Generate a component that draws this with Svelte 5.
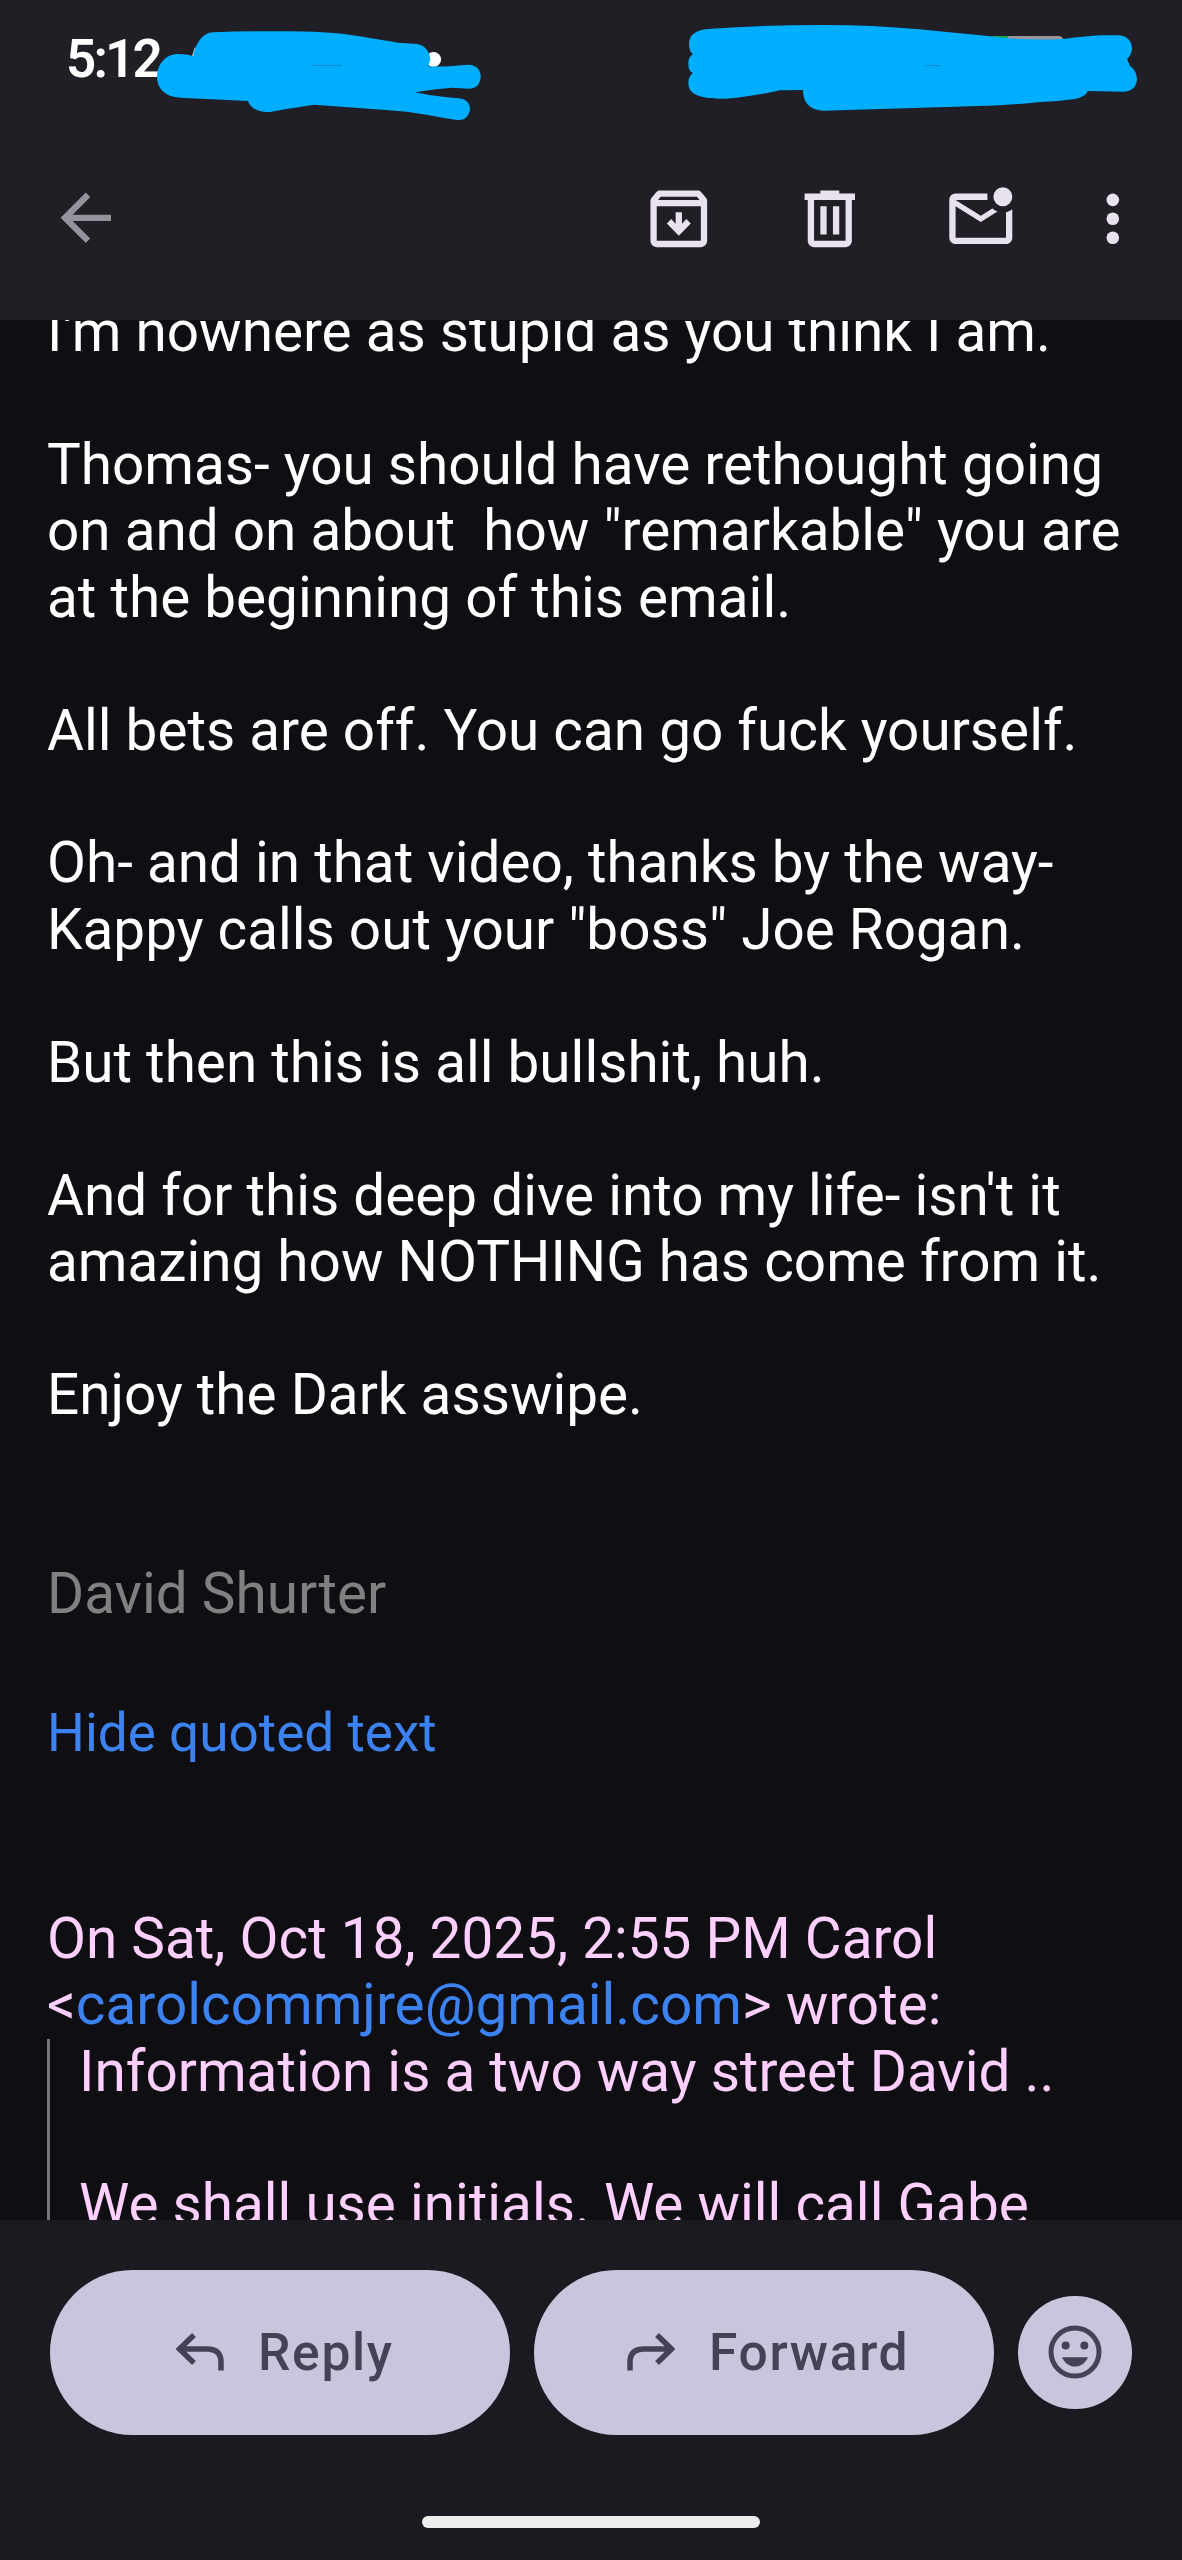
<!-- MailView.svelte -->
<script>
  const time = '5:12';
  const sender = 'Carol';
  const email = 'carolcommjre@gmail.com';

  const paragraphs = [
    ["I'm nowhere as stupid as you think I am."],
    [
      'Thomas- you should have rethought going',
      'on and on about  how "remarkable" you are',
      'at the beginning of this email.'
    ],
    ['All bets are off. You can go fuck yourself.'],
    [
      'Oh- and in that video, thanks by the way-',
      'Kappy calls out your "boss" Joe Rogan.'
    ],
    ['But then this is all bullshit, huh.'],
    [
      "And for this deep dive into my life- isn't it",
      'amazing how NOTHING has come from it.'
    ],
    ['Enjoy the Dark asswipe.']
  ];

  const quoted = [
    'Information is a two way street David ..',
    'We shall use initials. We will call Gabe'
  ];
</script>

<div class="screen">
  <header>
    <div class="status">{time}</div>

    <!-- marker strokes over the status bar -->
    <svg class="marker" viewBox="0 0 1182 130" aria-hidden="true">
      <circle cx="433.5" cy="59.5" r="7.6" fill="#fff" />
      <path d="M192 56l3-9 3 9z" fill="#ddd" />
      <path d="M993 36h15v6h-15z" fill="#1fa64a" />
      <path d="M1008 36h50q5 0 6 5h-56z" fill="#99959b" />
      <path
        fill="#00aeff"
        d="M157 77C157 64 166 54 178 54Q187 54 193 56C196 43 203 32 214 32.3Q245 31 283 31.3Q312 31 337 33.3C361 36 381 40 398 42.7L417 44C426 45 431 54 430 61L428 66.3Q440 67 452 66L469 64.7C477 65 481 71 480.7 77C480 84 477 88 470 88.7L452 87.7Q434 89 415 92.3Q431 96 447 97.3L459 98.3C467 99 470 104 470 109.3C469 116 465 121 457 120Q443 118 428 115Q407 111 386 110L314 104.7Q299 107 285 109.3L270 112C259 113 250 108 248 101L180 97.7C165 97 157 88 157 77Z"
      />
      <path
        fill="#00aeff"
        d="M689 44C689 34 697 30 708 29Q765 25 823 25Q872 25 919 29.3L993 36.6L1008 38.2Q1034 40.5 1063 39Q1088 36 1100 35.3H1117C1127 35 1132 41 1132 49Q1131 56 1127 59L1130 66C1135 69 1137 75 1137 80C1136 88 1131 91.7 1123 91.7L1088 91Q1085 97 1075 99Q1058 101.5 1040 102Q1006 105.5 971 106.3L823 110.7C809 110 803 102 803 90L780 90.3Q749 97 725 98.7C705 99 688 96 688.4 83Q688 77 692.8 73.3Q688 70 688.4 64Q688 57 692.8 54.3Q689 51 689 44Z"
      />
      <path d="M313 65.3l14 .4 15-.4" stroke="#0786c4" fill="none" />
      <path d="M925 66l8-.6 8 .6" stroke="#0786c4" fill="none" />
    </svg>

    <div class="toolbar">
      <svg class="icon back" viewBox="0 0 24 24">
        <path d="M20 11H7.83l5.59-5.59L12 4l-8 8 8 8 1.41-1.41L7.83 13H20v-2z" />
      </svg>
      <div class="actions">
        <svg class="icon" viewBox="0 0 24 24">
          <path
            fill-rule="evenodd"
            d="M20.54 5.23l-1.39-1.68C18.88 3.21 18.47 3 18 3H6c-.47 0-.88.21-1.16.55L3.46 5.23C3.17 5.57 3 6.02 3 6.5V19c0 1.1.9 2 2 2h14c1.1 0 2-.9 2-2V6.5c0-.48-.17-.93-.46-1.27zM6.24 5h11.52l.83 1.05H5.42L6.24 5zM5 19V8h14v11H5z"
          />
          <path d="M11 9.9v3.7L9.6 12.1 8.2 13.5l3.8 3.9 3.8-3.9-1.4-1.4L13 13.6V9.9z" />
        </svg>
        <svg class="icon" viewBox="0 0 24 24">
          <path
            fill-rule="evenodd"
            d="M15 4V3H9v1H4v2h1v13c0 1.1.9 2 2 2h10c1.1 0 2-.9 2-2V6h1V4h-5zm2 15H7V6h10v13zM9 8h2v9H9zM13 8h2v9h-2z"
          />
        </svg>
        <svg class="icon" viewBox="0 0 24 24">
          <path
            d="M22 8.98V18c0 1.1-.9 2-2 2H4c-1.1 0-2-.9-2-2V6c0-1.1.9-2 2-2h10.1v2H4l8 5 3.67-2.29c.47.43 1.02.76 1.63.98L12 13 4 8v10h16V9.9c.74-.15 1.42-.48 2-.92z"
          />
          <circle cx="19" cy="5" r="3" />
        </svg>
        <svg class="icon" viewBox="0 0 24 24">
          <circle cx="12" cy="6" r="2" />
          <circle cx="12" cy="12" r="2" />
          <circle cx="12" cy="18" r="2" />
        </svg>
      </div>
    </div>
  </header>

  <main>
    {#each paragraphs as lines}
      <p>{lines.join('\n')}</p>
    {/each}

    <p class="signature">David Shurter</p>

    <div class="toggle">Hide quoted text</div>

    <div class="quote-head">
      On Sat, Oct 18, 2025, 2:55 PM {sender}<br />
      &lt;<span class="link">{email}</span>&gt; wrote:
    </div>
    <blockquote>
      {#each quoted as line}
        <p>{line}</p>
      {/each}
    </blockquote>
  </main>

  <footer>
    <div class="buttons">
      <button class="pill">
        <svg class="arrow" viewBox="0 0 48 38">
          <path d="M18 2L3.5 16 18 30M4 16H31Q45 16 45 29V37.5" />
        </svg>
        <span>Reply</span>
      </button>
      <button class="pill forward">
        <svg class="arrow" viewBox="0 0 48 38">
          <path d="M30 2L44.5 16 30 30M44 16H17Q3 16 3 29V37.5" />
        </svg>
        <span>Forward</span>
      </button>
      <button class="emoji" aria-label="Add reaction">
        <svg viewBox="-28 -28 56 56">
          <circle r="24" fill="none" stroke="#454256" stroke-width="5" />
          <circle cx="-9.3" cy="-6.5" r="4" />
          <circle cx="9.3" cy="-6.5" r="4" />
          <path d="M-13 5.3H13C10.5 11 6 14.6 0 14.6S-10.5 11-13 5.3z" />
        </svg>
      </button>
    </div>
    <div class="handle"></div>
  </footer>
</div>

<style>
  :global(body) {
    margin: 0;
    background: #0f0e13;
  }

  .screen {
    display: flex;
    flex-direction: column;
    width: 1182px;
    height: 2560px;
    overflow: hidden;
    font-family: Roboto, sans-serif;
    background: #0f0e13;
  }

  header {
    position: relative;
    flex: none;
    height: 320px;
    background: #211f26;
  }

  .status {
    box-sizing: border-box;
    height: 180px;
    padding: 27px 0 0 66px;
    color: #fff;
    font-size: 53px;
    font-weight: 600;
    line-height: 64px;
    letter-spacing: -2.8px;
  }

  .marker {
    position: absolute;
    top: 0;
    left: 0;
    width: 1182px;
    height: 130px;
  }

  .toolbar {
    display: flex;
    justify-content: space-between;
    padding: 1px 31px 0 48px;
  }

  .actions {
    display: flex;
    gap: 75.6px;
  }

  .icon {
    width: 75.6px;
    height: 75.6px;
    fill: #e8e1ee;
  }

  .icon.back {
    margin-top: -1px;
    fill: #96929c;
  }

  .actions .icon:last-child {
    margin-left: -19px;
  }

  main {
    flex: none;
    box-sizing: border-box;
    height: 1900px;
    padding-left: 47px;
    overflow: hidden;
    color: #fff;
    font-size: 56.66px;
    line-height: 66.43px;
  }

  p {
    margin: 0 0 66.43px;
    white-space: pre;
  }

  main > p:first-child {
    margin-top: -21px;
  }

  .signature {
    margin: 132.86px 0 0;
    color: #808080;
  }

  .toggle {
    margin-top: 74px;
    color: #3c82f1;
    font-size: 53.1px;
    line-height: 62px;
  }

  .quote-head {
    margin-top: 142px;
    color: #ffd0ff;
  }

  .link {
    color: #3c82f1;
  }

  blockquote {
    margin: 0;
    padding-left: 29px;
    border-left: 3px solid #77757a;
    color: #ffd0ff;
  }

  blockquote p:first-child {
    padding-top: 0.5px;
  }

  footer {
    flex: 1;
    background: #1b1a20;
  }

  .buttons {
    display: flex;
    align-items: center;
    gap: 24.5px;
    padding: 50px 0 0 50px;
  }

  button {
    display: flex;
    align-items: center;
    border: none;
    padding: 0;
    color: #454256;
    fill: #454256;
    background: #cac4dc;
    font-family: inherit;
  }

  .pill {
    width: 459.5px;
    height: 164.5px;
    padding-left: 126px;
    border-radius: 83px;
    font-size: 51.5px;
    font-weight: 500;
    letter-spacing: 1.7px;
  }

  .pill span {
    margin-left: 34px;
  }

  .forward {
    padding-left: 93px;
  }

  .arrow {
    width: 48px;
    height: 38px;
    fill: none;
    stroke: #454256;
    stroke-width: 5.5;
  }

  .emoji {
    justify-content: center;
    width: 113.5px;
    height: 113.5px;
    border-radius: 50%;
  }

  .emoji svg {
    width: 56px;
    height: 56px;
  }

  .handle {
    width: 338px;
    height: 12px;
    margin: 81.5px auto 0;
    border-radius: 6px;
    background: #eee;
  }
</style>
